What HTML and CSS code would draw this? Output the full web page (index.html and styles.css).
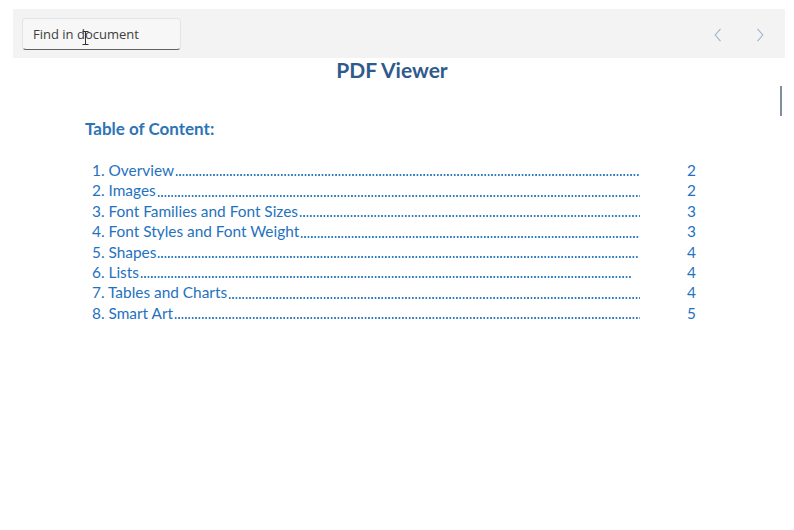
FILE: index.html
```html
<!DOCTYPE html>
<html>
<head>
<meta charset="utf-8">
<link rel="stylesheet" href="styles.css">
</head>
<body>
<div class="app">
  <div class="toolbar">
    <div class="search">
      <span class="placeholder">Find in document</span>
      <svg class="ibeam" width="7" height="14" viewBox="0 0 7 14"><path d="M0.5 0.5h6M3.5 0.5v13M0.5 13.5h6" stroke="#333" stroke-width="1" fill="none"/></svg>
    </div>
    <div class="nav">
      <svg class="chev" width="8" height="14" viewBox="0 0 8 14"><path d="M6.5 0.8L1.2 7l5.3 6.2" stroke="#9fb4cc" stroke-width="1.1" fill="none"/></svg>
      <svg class="chev" width="8" height="14" viewBox="0 0 8 14"><path d="M1.5 0.8L6.8 7l-5.3 6.2" stroke="#9fb4cc" stroke-width="1.1" fill="none"/></svg>
    </div>
  </div>
  <div class="page">
    <h1 class="title">PDF Viewer</h1>
    <h2 class="toc-head">Table of Content:</h2>
    <div class="toc">
      <div class="row"><span class="lead"><span class="label">1. Overview</span><span class="dots"></span></span><span class="num">2</span></div>
      <div class="row"><span class="lead"><span class="label">2. Images</span><span class="dots"></span></span><span class="num">2</span></div>
      <div class="row"><span class="lead"><span class="label">3. Font Families and Font Sizes</span><span class="dots"></span></span><span class="num">3</span></div>
      <div class="row"><span class="lead"><span class="label">4. Font Styles and Font Weight</span><span class="dots"></span></span><span class="num">3</span></div>
      <div class="row"><span class="lead"><span class="label">5. Shapes</span><span class="dots short1"></span></span><span class="num">4</span></div>
      <div class="row"><span class="lead"><span class="label">6. Lists</span><span class="dots short"></span></span><span class="num">4</span></div>
      <div class="row"><span class="lead"><span class="label">7. Tables and Charts</span><span class="dots"></span></span><span class="num">4</span></div>
      <div class="row"><span class="lead"><span class="label">8. Smart Art</span><span class="dots"></span></span><span class="num">5</span></div>
    </div>
    <div class="thumb"></div>
  </div>
</div>
</body>
</html>
```

FILE: styles.css
```css
html, body {
  margin: 0;
  padding: 0;
  background: #ffffff;
}
.app {
  width: 794px;
  height: 530px;
  padding: 9px 9px 0 13px;
  box-sizing: border-box;
  font-family: "Open Sans", "Noto Sans", sans-serif;
}
.toolbar {
  height: 49px;
  background: #f3f3f3;
  display: flex;
  align-items: center;
  justify-content: space-between;
  padding: 0 21px 0 9px;
  box-sizing: border-box;
}
.search {
  position: relative;
  width: 159px;
  height: 32px;
  box-sizing: border-box;
  border: 1px solid #e2e5e8;
  border-bottom: 1px solid #5f6368;
  border-radius: 4px;
  background: #f7f7f7;
  display: flex;
  align-items: center;
  padding-left: 10px;
  margin-top: 1px;
}
.placeholder {
  font-size: 13px;
  color: #3d3d3d;
}
.ibeam {
  position: absolute;
  left: 59px;
  top: 12px;
}
.nav {
  display: flex;
  gap: 34px;
  align-items: center;
  margin-top: 2px;
}
.page {
  position: relative;
  height: 472px;
}
.title {
  margin: 0;
  text-align: center;
  font-family: "Lato", "Open Sans", sans-serif;
  font-weight: 700;
  font-size: 21px;
  line-height: 24px;
  color: #2f5a8c;
  padding-right: 14px;
}
.toc-head {
  margin: 37px 0 0 72px;
  font-family: "Lato", "Open Sans", sans-serif;
  font-weight: 700;
  font-size: 17px;
  line-height: 20px;
  color: #2e74b5;
}
.toc {
  margin: 21px 0 0 79px;
  font-family: "Lato", "Open Sans", sans-serif;
  font-size: 15.4px;
  line-height: 20.4px;
  color: #1f72c0;
}
.row {
  display: flex;
  align-items: baseline;
}
.lead {
  width: 548px;
  display: flex;
  align-items: baseline;
}
.label {
  white-space: nowrap;
}
.dots {
  flex: 1;
  height: 2px;
  align-self: flex-end;
  margin-bottom: 4px;
  margin-left: 1px;
  background-image: radial-gradient(circle, #2f7cc4 0.8px, transparent 1px);
  background-size: 3.4px 2px;
  background-repeat: repeat-x;
}
.dots.short1 {
  margin-right: 2px;
}
.dots.short {
  margin-right: 8px;
}
.num {
  margin-left: 47px;
}
.thumb {
  position: absolute;
  right: 3px;
  top: 28px;
  width: 2px;
  height: 30px;
  background: #7f8fa1;
}
```
